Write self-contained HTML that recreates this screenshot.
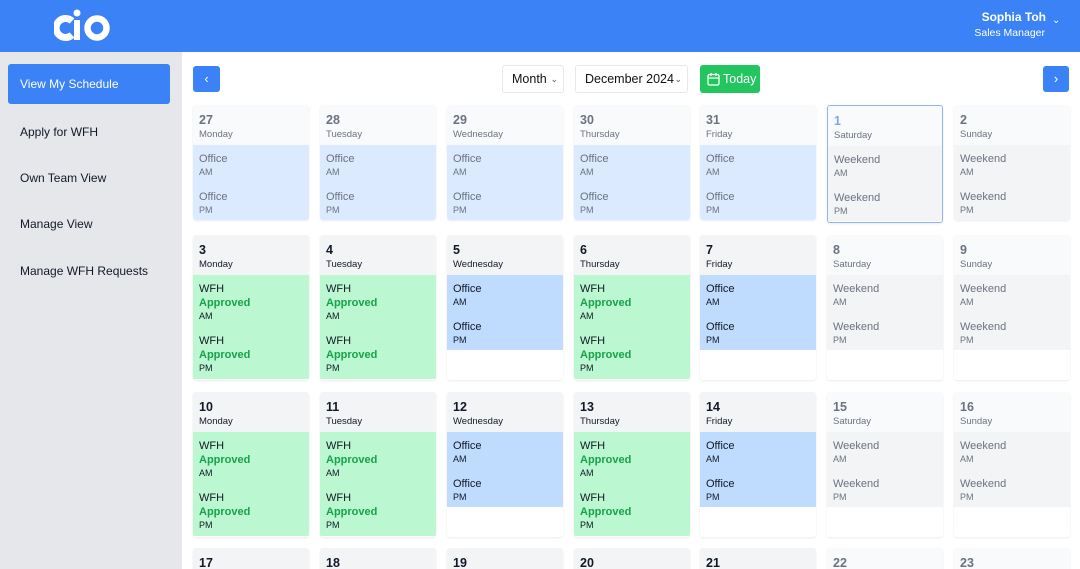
<!DOCTYPE html>
<html><head><meta charset="utf-8"><style>
*{box-sizing:border-box;margin:0;padding:0}
html,body{width:1080px;height:569px;overflow:hidden}
body{font-family:"Liberation Sans",Arial,sans-serif;background:#fff;position:relative}
.top{position:absolute;left:0;top:0;width:1080px;height:52px;background:#3b82f6}
.side{position:absolute;left:0;top:52px;width:182px;height:517px;background:#e5e7eb}
.nav{position:absolute;left:20px;font-size:12px;color:#111827}
.btnsel{position:absolute;left:8px;top:64px;width:162px;height:40px;background:#3b82f6;border-radius:3px;color:#fff;font-size:12px;line-height:41px;padding-left:12px}
.c{position:absolute;width:116px;border-radius:3px;overflow:hidden;background:#fff;box-shadow:0 1px 2px rgba(0,0,0,.08)}
.h{height:40px;padding:6px 6px 0;background:#f3f4f6}
.h b{display:block;font-size:12.5px;line-height:18px;color:#111827}
.h span{display:block;font-size:9.5px;line-height:11px;color:#111827}
.bl{padding:7px 6px 0}
.s{margin-bottom:12px}
.n{font-size:11px;line-height:14px;color:#111827}
.a{font-size:11px;line-height:14px;color:#16a34a;font-weight:bold}
.m{font-size:9px;line-height:12px;color:#111827}
.off{background:#bfdbfe;height:75px}
.wfh{background:#bbf7d0;height:104px}
.wk{background:#f3f4f6;height:75px}
.past .h{background:#f9fafb}.past .h b,.past .h span,.past .n,.past .m{color:#6b7280}
.past .off{background:#dbeafe}
.we .h b,.we .h span,.we .n,.we .m{color:#6b7280}
.we .h{background:#f9fafb}
.sel{border:1.5px solid #93b4f0}.sel .h b{color:#7ea6f0}
.ctl{position:absolute;top:65px;height:28px;border:1px solid #e5e7eb;border-radius:3px;background:#fff;font-size:12.5px;color:#111;line-height:26px;padding-left:9px}
.ctl i{position:absolute;right:5px;top:0;font-style:normal;font-size:9px;color:#555}
</style></head><body>
<div class="top">
<svg style="position:absolute;left:54px;top:7px" width="56" height="34" viewBox="0 0 56 34"><path d="M18 14 A9.5 9.5 0 1 0 18 28" fill="none" stroke="#fff" stroke-width="7"/><rect x="20" y="13" width="6" height="20" fill="#fff"/><circle cx="23" cy="6" r="3.5" fill="#fff"/><circle cx="43" cy="21" r="9.5" fill="none" stroke="#fff" stroke-width="6.5"/></svg>
<div style="position:absolute;right:34px;top:10px;color:#fff;font-size:12px;font-weight:bold">Sophia Toh</div>
<div style="position:absolute;right:35px;top:27px;color:#fff;font-size:10.5px">Sales Manager</div>
<div style="position:absolute;left:1052px;top:15px;color:#fff;font-size:10px">&#8964;</div>
</div>
<div class="side"></div>
<div class="btnsel">View My Schedule</div>
<div class="nav" style="top:125px">Apply for WFH</div>
<div class="nav" style="top:171px">Own Team View</div>
<div class="nav" style="top:217px">Manage View</div>
<div class="nav" style="top:264px">Manage WFH Requests</div>
<div style="position:absolute;left:193px;top:66px;width:27px;height:26px;background:#3b82f6;border-radius:3px;color:#fff;font-size:13px;text-align:center;line-height:25px">&#8249;</div>
<div style="position:absolute;left:1043px;top:66px;width:26px;height:26px;background:#3b82f6;border-radius:3px;color:#fff;font-size:13px;text-align:center;line-height:25px">&#8250;</div>
<div class="ctl" style="left:502px;width:62px">Month<i>&#8964;</i></div>
<div class="ctl" style="left:575px;width:113px">December 2024<i>&#8964;</i></div>
<div style="position:absolute;left:700px;top:65px;width:60px;height:28px;background:#22c55e;border-radius:3px;color:#fff;font-size:12.5px;line-height:28px;padding-left:23px">Today
<svg style="position:absolute;left:7px;top:7px" width="13" height="14" viewBox="0 0 13 14"><rect x="1" y="2.5" width="11" height="10.5" rx="1.5" fill="none" stroke="#fff" stroke-width="1.3"/><line x1="1" y1="6" x2="12" y2="6" stroke="#fff" stroke-width="1.2"/><line x1="4" y1="1" x2="4" y2="4" stroke="#fff" stroke-width="1.3"/><line x1="9" y1="1" x2="9" y2="4" stroke="#fff" stroke-width="1.3"/></svg></div>

<div class="c past" style="left:193px;top:105px"><div class="h"><b>27</b><span>Monday</span></div><div class="bl off"><div class="s"><div class="n">Office</div><div class="m">AM</div></div><div><div class="n">Office</div><div class="m">PM</div></div></div></div>
<div class="c past" style="left:320px;top:105px"><div class="h"><b>28</b><span>Tuesday</span></div><div class="bl off"><div class="s"><div class="n">Office</div><div class="m">AM</div></div><div><div class="n">Office</div><div class="m">PM</div></div></div></div>
<div class="c past" style="left:447px;top:105px"><div class="h"><b>29</b><span>Wednesday</span></div><div class="bl off"><div class="s"><div class="n">Office</div><div class="m">AM</div></div><div><div class="n">Office</div><div class="m">PM</div></div></div></div>
<div class="c past" style="left:574px;top:105px"><div class="h"><b>30</b><span>Thursday</span></div><div class="bl off"><div class="s"><div class="n">Office</div><div class="m">AM</div></div><div><div class="n">Office</div><div class="m">PM</div></div></div></div>
<div class="c past" style="left:700px;top:105px"><div class="h"><b>31</b><span>Friday</span></div><div class="bl off"><div class="s"><div class="n">Office</div><div class="m">AM</div></div><div><div class="n">Office</div><div class="m">PM</div></div></div></div>
<div class="c we sel" style="left:827px;top:105px;height:118px"><div class="h"><b>1</b><span>Saturday</span></div><div class="bl wk"><div class="s"><div class="n">Weekend</div><div class="m">AM</div></div><div><div class="n">Weekend</div><div class="m">PM</div></div></div></div>
<div class="c we" style="left:954px;top:105px"><div class="h"><b>2</b><span>Sunday</span></div><div class="bl wk"><div class="s"><div class="n">Weekend</div><div class="m">AM</div></div><div><div class="n">Weekend</div><div class="m">PM</div></div></div></div>

<div class="c" style="left:193px;top:235px;height:145px"><div class="h"><b>3</b><span>Monday</span></div><div class="bl wfh"><div class="s"><div class="n">WFH</div><div class="a">Approved</div><div class="m">AM</div></div><div><div class="n">WFH</div><div class="a">Approved</div><div class="m">PM</div></div></div></div>
<div class="c" style="left:320px;top:235px;height:145px"><div class="h"><b>4</b><span>Tuesday</span></div><div class="bl wfh"><div class="s"><div class="n">WFH</div><div class="a">Approved</div><div class="m">AM</div></div><div><div class="n">WFH</div><div class="a">Approved</div><div class="m">PM</div></div></div></div>
<div class="c" style="left:447px;top:235px;height:145px"><div class="h"><b>5</b><span>Wednesday</span></div><div class="bl off"><div class="s"><div class="n">Office</div><div class="m">AM</div></div><div><div class="n">Office</div><div class="m">PM</div></div></div></div>
<div class="c" style="left:574px;top:235px;height:145px"><div class="h"><b>6</b><span>Thursday</span></div><div class="bl wfh"><div class="s"><div class="n">WFH</div><div class="a">Approved</div><div class="m">AM</div></div><div><div class="n">WFH</div><div class="a">Approved</div><div class="m">PM</div></div></div></div>
<div class="c" style="left:700px;top:235px;height:145px"><div class="h"><b>7</b><span>Friday</span></div><div class="bl off"><div class="s"><div class="n">Office</div><div class="m">AM</div></div><div><div class="n">Office</div><div class="m">PM</div></div></div></div>
<div class="c we" style="left:827px;top:235px;height:145px"><div class="h"><b>8</b><span>Saturday</span></div><div class="bl wk"><div class="s"><div class="n">Weekend</div><div class="m">AM</div></div><div><div class="n">Weekend</div><div class="m">PM</div></div></div></div>
<div class="c we" style="left:954px;top:235px;height:145px"><div class="h"><b>9</b><span>Sunday</span></div><div class="bl wk"><div class="s"><div class="n">Weekend</div><div class="m">AM</div></div><div><div class="n">Weekend</div><div class="m">PM</div></div></div></div>

<div class="c" style="left:193px;top:392px;height:145px"><div class="h"><b>10</b><span>Monday</span></div><div class="bl wfh"><div class="s"><div class="n">WFH</div><div class="a">Approved</div><div class="m">AM</div></div><div><div class="n">WFH</div><div class="a">Approved</div><div class="m">PM</div></div></div></div>
<div class="c" style="left:320px;top:392px;height:145px"><div class="h"><b>11</b><span>Tuesday</span></div><div class="bl wfh"><div class="s"><div class="n">WFH</div><div class="a">Approved</div><div class="m">AM</div></div><div><div class="n">WFH</div><div class="a">Approved</div><div class="m">PM</div></div></div></div>
<div class="c" style="left:447px;top:392px;height:145px"><div class="h"><b>12</b><span>Wednesday</span></div><div class="bl off"><div class="s"><div class="n">Office</div><div class="m">AM</div></div><div><div class="n">Office</div><div class="m">PM</div></div></div></div>
<div class="c" style="left:574px;top:392px;height:145px"><div class="h"><b>13</b><span>Thursday</span></div><div class="bl wfh"><div class="s"><div class="n">WFH</div><div class="a">Approved</div><div class="m">AM</div></div><div><div class="n">WFH</div><div class="a">Approved</div><div class="m">PM</div></div></div></div>
<div class="c" style="left:700px;top:392px;height:145px"><div class="h"><b>14</b><span>Friday</span></div><div class="bl off"><div class="s"><div class="n">Office</div><div class="m">AM</div></div><div><div class="n">Office</div><div class="m">PM</div></div></div></div>
<div class="c we" style="left:827px;top:392px;height:145px"><div class="h"><b>15</b><span>Saturday</span></div><div class="bl wk"><div class="s"><div class="n">Weekend</div><div class="m">AM</div></div><div><div class="n">Weekend</div><div class="m">PM</div></div></div></div>
<div class="c we" style="left:954px;top:392px;height:145px"><div class="h"><b>16</b><span>Sunday</span></div><div class="bl wk"><div class="s"><div class="n">Weekend</div><div class="m">AM</div></div><div><div class="n">Weekend</div><div class="m">PM</div></div></div></div>

<div class="c" style="left:193px;top:548px;height:40px"><div class="h"><b>17</b></div></div>
<div class="c" style="left:320px;top:548px;height:40px"><div class="h"><b>18</b></div></div>
<div class="c" style="left:447px;top:548px;height:40px"><div class="h"><b>19</b></div></div>
<div class="c" style="left:574px;top:548px;height:40px"><div class="h"><b>20</b></div></div>
<div class="c" style="left:700px;top:548px;height:40px"><div class="h"><b>21</b></div></div>
<div class="c we" style="left:827px;top:548px;height:40px"><div class="h"><b>22</b></div></div>
<div class="c we" style="left:954px;top:548px;height:40px"><div class="h"><b>23</b></div></div>
</body></html>
